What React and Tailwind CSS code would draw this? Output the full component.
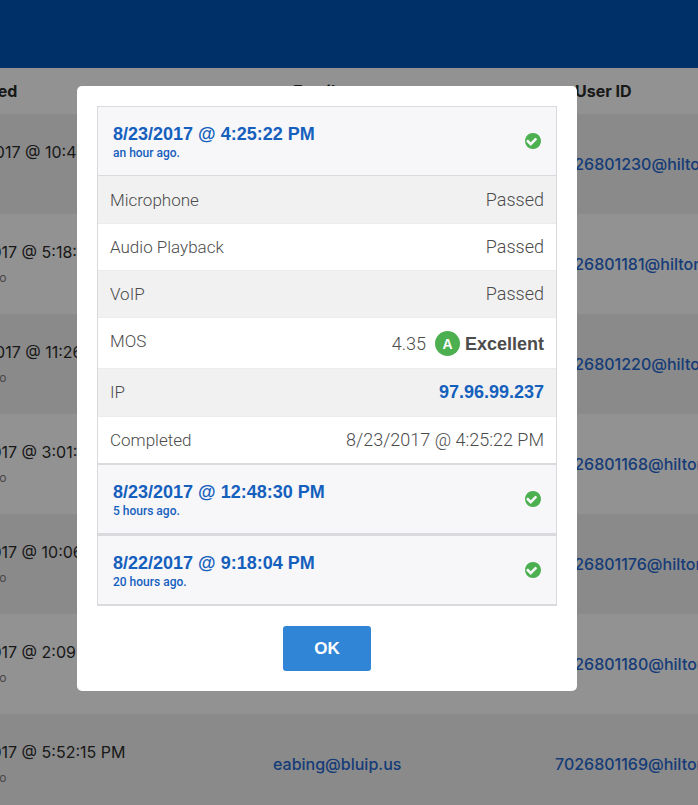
const tableRows = [
  { date: "8/23/2017 @ 10:49:12 AM", ago: "1 day ago", email: "", user: "7026801230@hilton" },
  { date: "8/21/2017 @ 5:18:40 PM", ago: "2 days ago", email: "", user: "7026801181@hilton" },
  { date: "8/20/2017 @ 11:26:08 AM", ago: "3 days ago", email: "", user: "7026801220@hilton" },
  { date: "8/21/2017 @ 3:01:33 PM", ago: "2 days ago", email: "", user: "7026801168@hilton" },
  { date: "8/21/2017 @ 10:06:21 AM", ago: "2 days ago", email: "", user: "7026801176@hilton" },
  { date: "8/21/2017 @ 2:09:57 PM", ago: "2 days ago", email: "", user: "7026801180@hilton" },
  { date: "8/21/2017 @ 5:52:15 PM", ago: "2 days ago", email: "eabing@bluip.us", user: "7026801169@hilton" },
];

const light = "font-['Roboto','Liberation_Sans',sans-serif] font-light";
const strong = "font-['Liberation_Sans',Arial,sans-serif] font-bold";

const details = [
  { label: "Microphone", value: "Passed", height: "h-[47px]" },
  { label: "Audio Playback", value: "Passed", height: "h-[47px]" },
  { label: "VoIP", value: "Passed", height: "h-[47px]" },
  {
    label: "MOS",
    height: "h-[51px]",
    value: (
      <span className="flex items-center justify-end pt-[2px]">
        <span className="mr-[9px]">4.35</span>
        <span className="mr-[5px] flex size-[25px] items-center justify-center rounded-full bg-[#4caf50] font-['Liberation_Sans',Arial,sans-serif] text-[14px] font-bold text-white">
          A
        </span>
        <span className={strong}>Excellent</span>
      </span>
    ),
  },
  {
    label: "IP",
    height: "h-[48px]",
    value: (
      <a href="#ip" className={`text-[#1560bd] ${strong}`}>
        97.96.99.237
      </a>
    ),
  },
  { label: "Completed", value: "8/23/2017 @ 4:25:22 PM", height: "h-[47px]" },
];

function CheckCircle() {
  return (
    <svg viewBox="128 128 1536 1536" className="mb-px size-4 fill-[#4caf50]" aria-hidden="true">
      <path d="M1284 734q0-28-18-46l-91-90q-19-19-45-19t-45 19l-408 407-226-226q-19-19-45-19t-45 19l-91 90q-18 18-18 46 0 27 18 45l362 362q19 19 45 19 27 0 46-19l543-543q18-18 18-45zm380 162q0 209-103 385.5t-279.5 279.5-385.5 103-385.5-103-279.5-279.5-103-385.5 103-385.5 279.5-279.5 385.5-103 385.5 103 279.5 279.5 103 385.5z" />
    </svg>
  );
}

function Details() {
  return (
    <table className={`w-full border-collapse text-[18px] leading-[24px] text-[#4c4c4c] ${light}`}>
      <tbody>
        {details.map((row) => (
          <tr
            key={row.label}
            className={`${row.height} shadow-[inset_0_1px_0_#ececec] odd:bg-[#f1f1f1] first:shadow-none`}
          >
            <th scope="row" className="px-3 pt-3 text-left align-top text-[17px] font-light">
              {row.label}
            </th>
            <td className="px-3 pt-3 text-right align-top">{row.value}</td>
          </tr>
        ))}
      </tbody>
    </table>
  );
}

function Test({ date, ago, open }) {
  return (
    <section className="border border-[#d9dadd]">
      <button
        type="button"
        aria-expanded={!!open}
        className="flex h-[69px] w-full items-center justify-between border-b border-[#d9dadd] bg-[#f7f7fa] px-[15px] text-left text-[#1560bd]"
      >
        <span className="pt-[2px]">
          <span className={`block text-[18px] leading-[22px] ${strong}`}>{date}</span>
          <span className="block font-['Roboto','Liberation_Sans',sans-serif] text-[12px] leading-[16px] font-medium">
            {ago}
          </span>
        </span>
        <CheckCircle />
      </button>
      {open && <Details />}
    </section>
  );
}

export default function App() {
  return (
    <div className="relative h-screen overflow-hidden bg-[#f3f3f3] font-['Inter','Liberation_Sans',sans-serif] text-[16px] text-[#2b2b2b]">
      <header className="h-[68px] bg-[#0050ad]" />
      <table className="-ml-[56px] w-[calc(100%+156px)] table-fixed border-collapse text-left leading-6">
        <colgroup>
          <col className="w-[329px]" />
          <col className="w-[282px]" />
          <col />
        </colgroup>
        <thead>
          <tr className="h-[46px]">
            <th className="pl-5 text-left font-bold">Tested</th>
            <th className="pl-5 text-left font-bold">Email</th>
            <th className="pl-5 text-left font-bold">User ID</th>
          </tr>
        </thead>
        <tbody>
          {tableRows.map((row) => (
            <tr key={row.user} className="h-[100px] whitespace-nowrap odd:bg-[#e6e6e6]">
              <td>
                <div className="pt-[2px]">{row.date}</div>
                <div className="pt-[2px] text-[12px] text-[#777]">{row.ago}</div>
              </td>
              <td className="font-medium text-[#2564c8]">
                {row.email && <a href="#email">{row.email}</a>}
              </td>
              <td className="font-medium text-[#2564c8]">
                <a href="#user">{row.user}</a>
              </td>
            </tr>
          ))}
        </tbody>
      </table>

      <div className="absolute inset-0 flex items-center justify-center bg-black/40 pr-11 pb-7">
        <div
          role="dialog"
          aria-modal="true"
          className="flex w-[500px] flex-col items-center rounded-[5px] bg-white p-5"
        >
          <div className="w-full">
            <Test date="8/23/2017 @ 4:25:22 PM" ago="an hour ago." open />
            <Test date="8/23/2017 @ 12:48:30 PM" ago="5 hours ago." />
            <Test date="8/22/2017 @ 9:18:04 PM" ago="20 hours ago." />
          </div>
          <button
            type="button"
            className={`mt-5 h-[45px] w-[88px] rounded-[3px] bg-[#3085d6] text-[17px] text-white ${strong}`}
          >
            OK
          </button>
        </div>
      </div>
    </div>
  );
}
